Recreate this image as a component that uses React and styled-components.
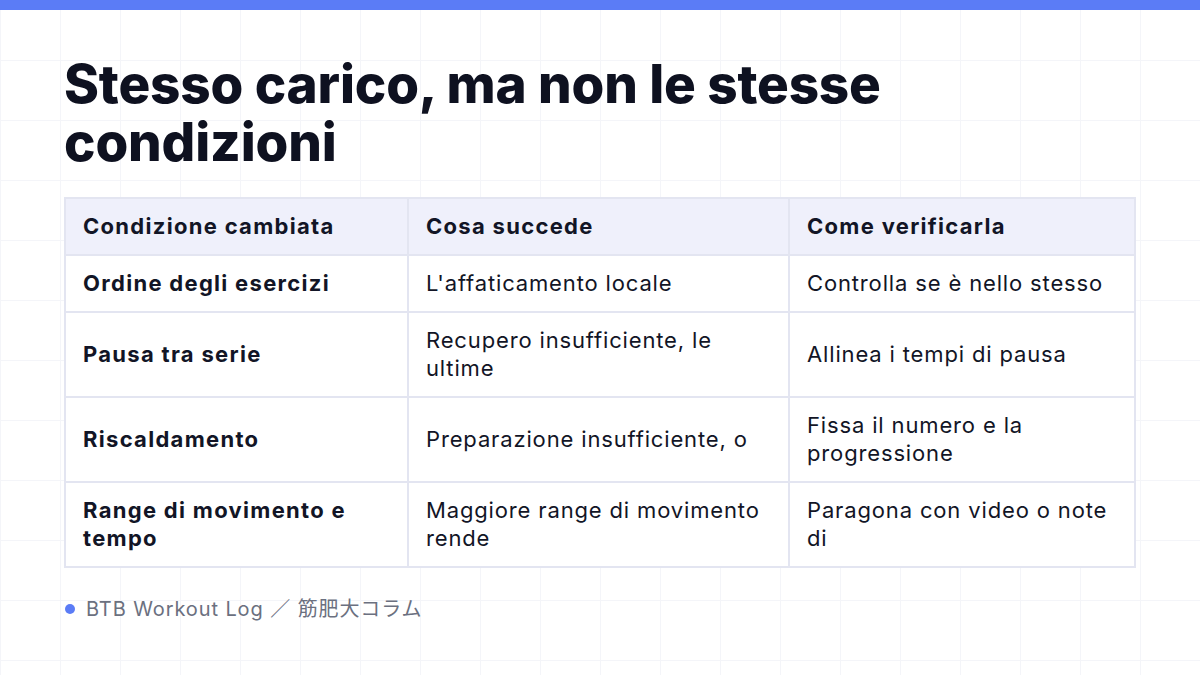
import React from "react";
import styled, { createGlobalStyle } from "styled-components";

const Global = createGlobalStyle`
  html, body { margin: 0; padding: 0; }
  body {
    width: 1200px;
    height: 675px;
    overflow: hidden;
    background-color: #ffffff;
    background-image:
      linear-gradient(to right, #f4f5f9 1px, transparent 1px),
      linear-gradient(to bottom, #f4f5f9 1px, transparent 1px);
    background-size: 60px 60px;
    font-family: "Inter", "Noto Sans CJK JP", sans-serif;
    color: #0f1222;
  }
`;

const Slide = styled.div`
  width: 1200px;
  height: 675px;
  display: flex;
  flex-direction: column;
`;

const TopBar = styled.div`
  height: 10px;
  background: #5b7cf6;
  flex-shrink: 0;
`;

const Content = styled.div`
  padding: 45px 64px 0 64px;
  display: flex;
  flex-direction: column;
`;

const Title = styled.h1`
  margin: 0;
  font-family: "Inter", "Noto Sans CJK JP", sans-serif;
  font-weight: 800;
  font-size: 53px;
  line-height: 58px;
  letter-spacing: -0.15px;
  color: #0e1120;
`;

const Table = styled.table`
  margin-top: 26px;
  width: 1070px;
  border-collapse: collapse;
  table-layout: fixed;
  border: 2px solid #e3e5f1;
`;

const Cell = styled.td`
  border: 2px solid #e3e5f1;
  padding: 13px 14px 14px 17px;
  font-size: 22px;
  line-height: 28px;
  letter-spacing: ${(p) => (p.$bold ? "1.3px" : "0.85px")};
  vertical-align: middle;
  text-align: left;
  font-weight: ${(p) => (p.$bold ? 700 : 400)};
  color: #121526;
  background: ${(p) => (p.$head ? "#eff0fb" : "#ffffff")};
`;

const Footer = styled.div`
  margin-top: 27px;
  display: flex;
  align-items: center;
  gap: 11px;
  font-size: 20px;
  line-height: 28px;
  letter-spacing: 0.9px;
  color: #6b7080;
  padding-left: 1px;
`;

const Dot = styled.span`
  width: 10px;
  height: 10px;
  border-radius: 50%;
  background: #5b7cf6;
`;

const rows = [
  ["Ordine degli esercizi", "L'affaticamento locale", "Controlla se è nello stesso"],
  ["Pausa tra serie", "Recupero insufficiente, le ultime", "Allinea i tempi di pausa"],
  ["Riscaldamento", "Preparazione insufficiente, o", "Fissa il numero e la progressione"],
  ["Range di movimento e tempo", "Maggiore range di movimento rende", "Paragona con video o note di"],
];

export default function App() {
  return (
    <>
      <Global />
      <Slide>
        <TopBar />
        <Content>
          <Title>
            Stesso carico, ma non le stesse
            <br />
            condizioni
          </Title>
          <Table>
            <colgroup>
              <col style={{ width: "343px" }} />
              <col style={{ width: "381px" }} />
              <col style={{ width: "346px" }} />
            </colgroup>
            <thead>
              <tr>
                <Cell as="th" $head $bold>Condizione cambiata</Cell>
                <Cell as="th" $head $bold>Cosa succede</Cell>
                <Cell as="th" $head $bold>Come verificarla</Cell>
              </tr>
            </thead>
            <tbody>
              {rows.map((r) => (
                <tr key={r[0]}>
                  <Cell $bold>{r[0]}</Cell>
                  <Cell>{r[1]}</Cell>
                  <Cell>{r[2]}</Cell>
                </tr>
              ))}
            </tbody>
          </Table>
          <Footer>
            <Dot />
            BTB Workout Log ／ 筋肥大コラム
          </Footer>
        </Content>
      </Slide>
    </>
  );
}
